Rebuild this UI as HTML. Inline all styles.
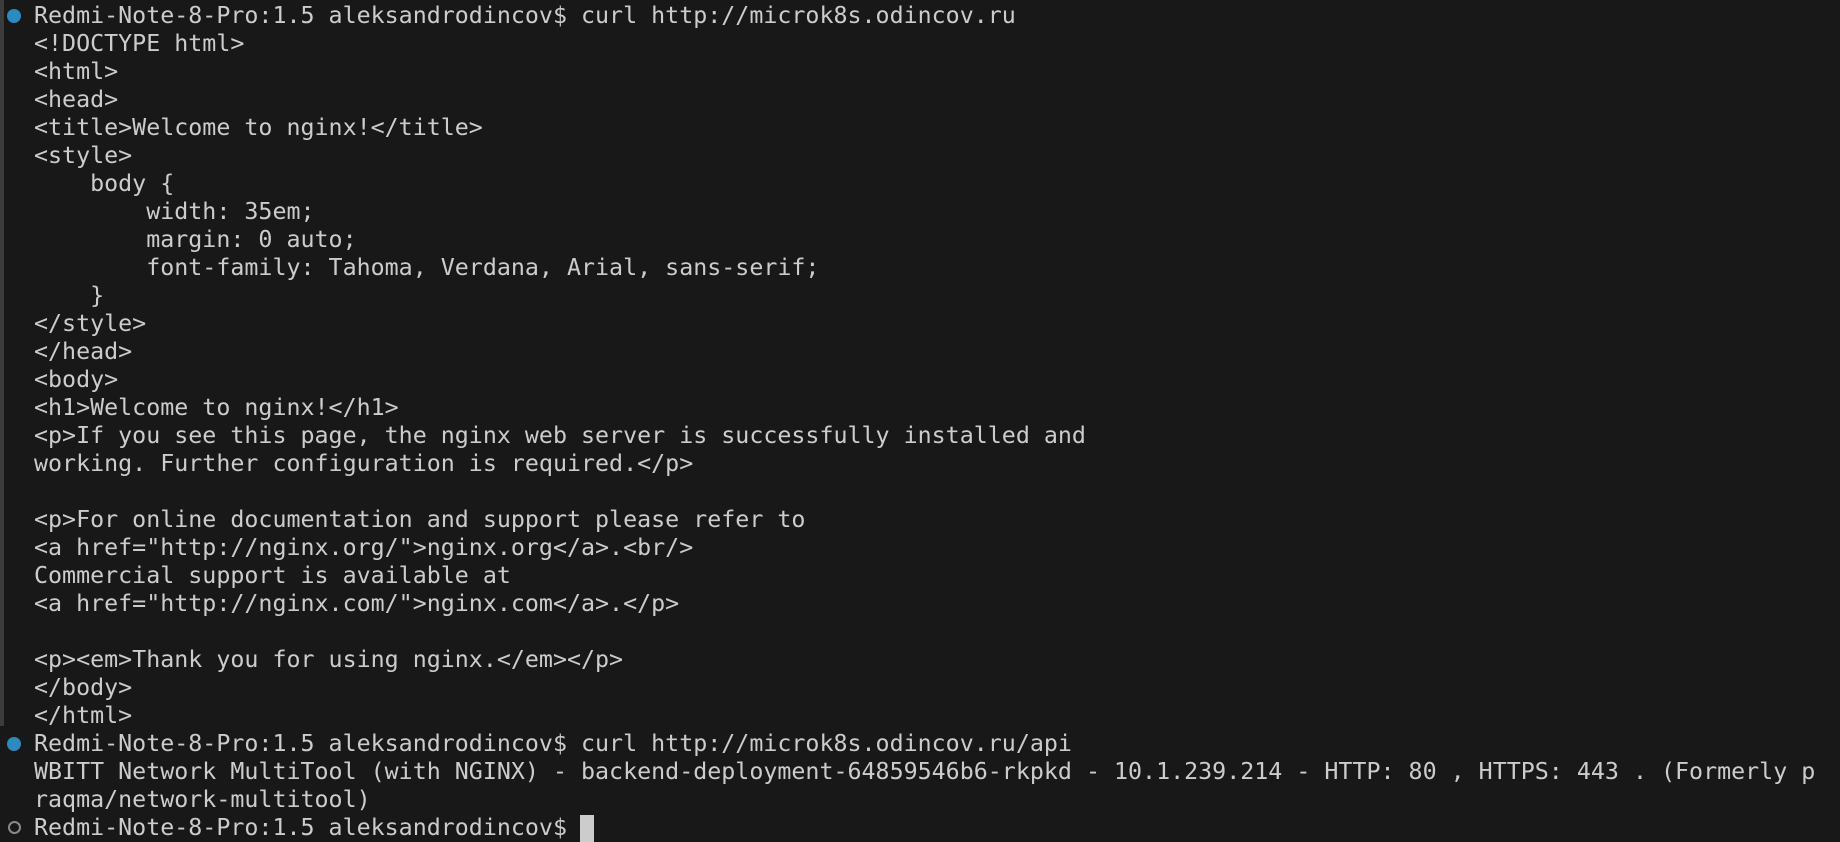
<!DOCTYPE html>
<html><head><style>
html,body{margin:0;padding:0;background:#181818;width:1840px;height:842px;overflow:hidden}
.bar{position:absolute;left:0;top:0;width:4px;height:726px;background:#3c3c3c}
pre{position:absolute;left:34px;top:2px;margin:0;font-family:"DejaVu Sans Mono","Liberation Mono",monospace;font-size:23.3px;line-height:28px;color:#cccccc;white-space:pre}
.dot{position:absolute;left:7px;width:14px;height:14px;border-radius:50%;background:#2b8ac0}
.odot{position:absolute;left:8px;border-radius:50%;border:2px solid #8a8a8a;box-sizing:content-box;width:9px;height:9px}
.cur{position:absolute;left:580px;top:815px;width:14px;height:27px;background:#cccccc}
</style></head><body>
<div class="bar"></div>
<div class="dot" style="top:9px"></div>
<div class="dot" style="top:737px"></div>
<div class="odot" style="top:821px"></div>
<pre>Redmi-Note-8-Pro:1.5 aleksandrodincov$ curl http://microk8s.odincov.ru
&lt;!DOCTYPE html&gt;
&lt;html&gt;
&lt;head&gt;
&lt;title&gt;Welcome to nginx!&lt;/title&gt;
&lt;style&gt;
    body {
        width: 35em;
        margin: 0 auto;
        font-family: Tahoma, Verdana, Arial, sans-serif;
    }
&lt;/style&gt;
&lt;/head&gt;
&lt;body&gt;
&lt;h1&gt;Welcome to nginx!&lt;/h1&gt;
&lt;p&gt;If you see this page, the nginx web server is successfully installed and
working. Further configuration is required.&lt;/p&gt;

&lt;p&gt;For online documentation and support please refer to
&lt;a href="http://nginx.org/"&gt;nginx.org&lt;/a&gt;.&lt;br/&gt;
Commercial support is available at
&lt;a href="http://nginx.com/"&gt;nginx.com&lt;/a&gt;.&lt;/p&gt;

&lt;p&gt;&lt;em&gt;Thank you for using nginx.&lt;/em&gt;&lt;/p&gt;
&lt;/body&gt;
&lt;/html&gt;
Redmi-Note-8-Pro:1.5 aleksandrodincov$ curl http://microk8s.odincov.ru/api
WBITT Network MultiTool (with NGINX) - backend-deployment-64859546b6-rkpkd - 10.1.239.214 - HTTP: 80 , HTTPS: 443 . (Formerly p
raqma/network-multitool)
Redmi-Note-8-Pro:1.5 aleksandrodincov$ </pre>
<div class="cur"></div>
</body></html>
